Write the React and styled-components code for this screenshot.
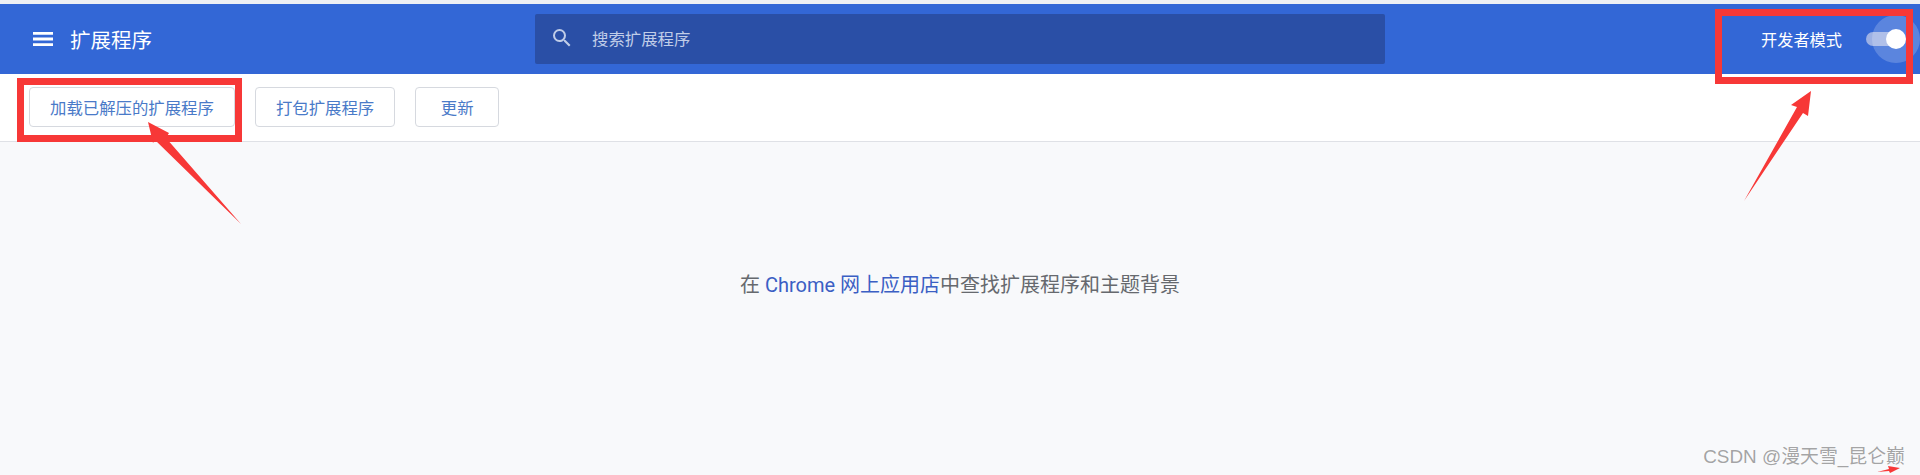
import React from 'react'
import styled, { createGlobalStyle } from 'styled-components'

const cjk = '"Roboto", "Noto Sans CJK SC", sans-serif'

const GlobalStyle = createGlobalStyle`
  html, body {
    margin: 0;
    padding: 0;
    background: #f8f9fb;
  }
  * {
    box-sizing: border-box;
  }
`

const Page = styled.div`
  position: relative;
  width: 1920px;
  height: 475px;
  overflow: hidden;
  background: #f8f9fb;
  font-family: ${cjk};
`

const TopStrip = styled.div`
  height: 4px;
  background: #eef0f4;
`

const Header = styled.header`
  display: grid;
  grid-template-columns: 535px 850px 1fr;
  align-items: center;
  height: 70px;
  background: #3367d6;
  color: #fff;
`

const Brand = styled.div`
  display: flex;
  align-items: center;
  gap: 15px;
  padding-left: 31px;
  font-size: 20.5px;
`

const SearchBox = styled.div`
  display: flex;
  align-items: center;
  gap: 18px;
  height: 50px;
  padding: 0 0 2px 15px;
  border-radius: 2px;
  background: #2a4fa6;
  color: #c0cde8;
  font-size: 16.4px;
`

const DevMode = styled.div`
  display: flex;
  align-items: center;
  justify-content: flex-end;
  gap: 24px;
  padding-right: 20px;
  font-size: 16.2px;
`

const Toggle = styled.div`
  position: relative;
  width: 34px;
  height: 14px;
  border-radius: 7px;
  background: #9db1e4;
`

const Ripple = styled.span`
  position: absolute;
  top: -17px;
  right: -20px;
  width: 48px;
  height: 48px;
  border-radius: 50%;
  background: rgba(255, 255, 255, 0.2);
`

const Knob = styled.span`
  position: absolute;
  top: -3px;
  right: -6px;
  width: 20px;
  height: 20px;
  border-radius: 50%;
  background: #fff;
`

const Toolbar = styled.div`
  display: flex;
  align-items: center;
  gap: 20px;
  height: 68px;
  padding: 0 29px 2px;
  background: #fff;
  border-bottom: 1px solid #dfe1e6;
`

const Button = styled.button`
  min-width: 84px;
  height: 40px;
  padding: 0 20px;
  border: 1px solid #d6d9df;
  border-radius: 4px;
  background: #fff;
  color: #4a7ac8;
  font-family: inherit;
  font-size: 16.4px;
`

const Empty = styled.main`
  padding-top: 127px;
  text-align: center;
  color: #66696e;
  font-size: 20px;
`

const StoreLink = styled.a`
  color: #3b5fc4;
  text-decoration: none;
`

const RedBox = styled.div`
  position: absolute;
  left: ${props => props.x}px;
  top: ${props => props.y}px;
  width: ${props => props.w}px;
  height: ${props => props.h}px;
  border: 7px solid #f73837;
`

const Arrows = styled.svg`
  position: absolute;
  left: 0;
  top: 0;
`

const Watermark = styled.div`
  position: absolute;
  right: 15px;
  bottom: 7px;
  color: rgba(90, 90, 90, 0.55);
  font-size: 18.9px;
  font-family: "Liberation Sans", "Noto Sans CJK SC", sans-serif;
`

function MenuIcon () {
  return (
    <svg width='24' height='24' viewBox='0 0 24 24' fill='#fff'>
      <path d='M2 5h20v2.8H2zM2 10.6h20v2.8H2zM2 16.2h20V19H2z' />
    </svg>
  )
}

function SearchIcon () {
  return (
    <svg width='24' height='24' viewBox='0 0 24 24' fill='#c0cde8'>
      <path d='M15.5 14h-.79l-.28-.27A6.47 6.47 0 0 0 16 9.5 6.5 6.5 0 1 0 9.5 16c1.61 0 3.09-.59 4.23-1.57l.27.28v.79l5 4.99L20.49 19l-4.99-5zm-6 0C7.01 14 5 11.99 5 9.5S7.01 5 9.5 5 14 7.01 14 9.5 11.99 14 9.5 14z' />
    </svg>
  )
}

export default function App () {
  return (
    <Page>
      <GlobalStyle />
      <TopStrip />
      <Header>
        <Brand>
          <MenuIcon />
          扩展程序
        </Brand>
        <SearchBox>
          <SearchIcon />
          搜索扩展程序
        </SearchBox>
        <DevMode>
          开发者模式
          <Toggle>
            <Ripple />
            <Knob />
          </Toggle>
        </DevMode>
      </Header>
      <Toolbar>
        <Button>加载已解压的扩展程序</Button>
        <Button>打包扩展程序</Button>
        <Button>更新</Button>
      </Toolbar>
      <Empty>
        在 <StoreLink>Chrome 网上应用店</StoreLink>中查找扩展程序和主题背景
      </Empty>
      <RedBox x={17} y={78} w={225} h={64} />
      <RedBox x={1715} y={9} w={198} h={75} />
      <Arrows width='1920' height='475' fill='#f73837'>
        <path d='M148 122 L169 133 L166 138 L241 224 L155 140 L153 143 Z' />
        <path d='M1811 91 L1808 116 L1803 113 L1744 201 L1797 107 L1791 105 Z' />
        <path d='M1877 472 L1889 469 L1888 466 L1900 468 L1890 473 L1889 471 Z' />
      </Arrows>
      <Watermark>CSDN @漫天雪_昆仑巅</Watermark>
    </Page>
  )
}
